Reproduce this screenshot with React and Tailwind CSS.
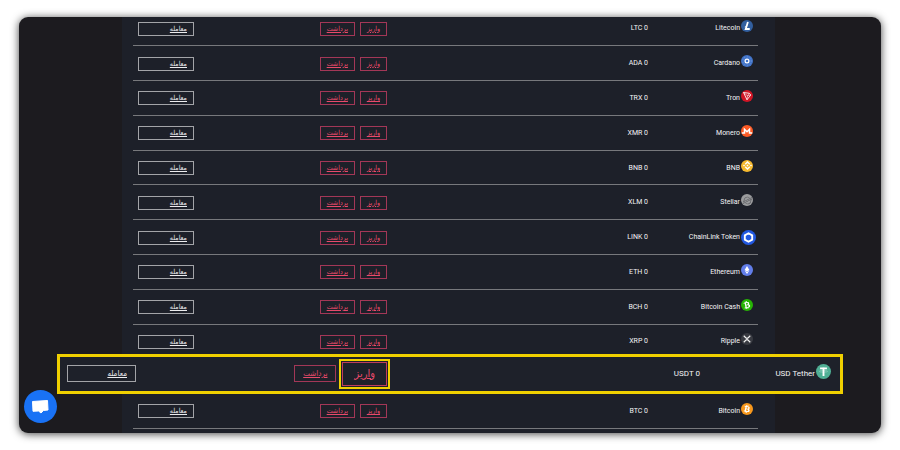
import { FaBtc, FaEthereum } from 'react-icons/fa';
import { SiBinance, SiStellar } from 'react-icons/si';

const LitecoinMark = () => (
  <svg viewBox="0 0 24 24" className="w-full h-full" fill="none" stroke="#fff" strokeWidth="3.6">
    <path d="M13.8 4 L9.4 18 H17.5" />
    <path d="M7.5 14 L13 11.5" strokeWidth="1.4" />
  </svg>
);

const CardanoMark = () => (
  <svg viewBox="0 0 24 24" className="w-full h-full" fill="none" stroke="#fff">
    <circle cx="12" cy="12" r="3.8" strokeWidth="2.4" />
    <circle cx="12" cy="12" r="8.5" strokeWidth="1.4" strokeDasharray="1.4 4.2" opacity="0.4" />
  </svg>
);

const TronMark = () => (
  <svg viewBox="0 0 24 24" className="w-full h-full" fill="none" stroke="#fff" strokeWidth="1.7" strokeLinejoin="round">
    <path d="M5 5 L16.5 6.5 L19.5 10 L12 19.5 Z" />
    <path d="M5 5 L13 11.5 L12 19.5 M13 11.5 L16.5 6.5 M13 11.5 L19.5 10" strokeWidth="1.1" />
  </svg>
);

const MoneroMark = () => (
  <svg viewBox="0 0 24 24" className="w-full h-full" fill="none" stroke="#fff" strokeWidth="3">
    <path d="M1.5 16 H7 V8.5 L12 13.5 L17 8.5 V16 H22.5" />
  </svg>
);

const ChainlinkMark = () => (
  <svg viewBox="0 0 24 24" className="w-full h-full" fill="none" stroke="#fff" strokeWidth="3">
    <path d="M12 5.2 L17.9 8.6 V15.4 L12 18.8 L6.1 15.4 V8.6 Z" />
  </svg>
);

const RippleMark = () => (
  <svg viewBox="0 0 24 24" className="w-full h-full" fill="none" stroke="#f2f2f2" strokeWidth="2.2">
    <path d="M5.5 5.5 L9.5 9.5 Q12 12 14.5 9.5 L18.5 5.5" />
    <path d="M5.5 18.5 L9.5 14.5 Q12 12 14.5 14.5 L18.5 18.5" />
  </svg>
);

const TetherMark = () => (
  <svg viewBox="0 0 24 24" className="w-full h-full" fill="none" stroke="#fff">
    <path d="M6.5 7 H17.5" strokeWidth="3" />
    <path d="M12 6 V19" strokeWidth="3" />
    <ellipse cx="12" cy="11.8" rx="6.5" ry="1.3" strokeWidth="0.8" opacity="0.5" />
  </svg>
);

const BitcoinMark = () => <FaBtc className="w-[8px] h-[8px] text-white rotate-12" />;
const BitcoinCashMark = () => <FaBtc className="w-[8px] h-[8px] text-white -rotate-12" />;
const EthereumMark = () => <FaEthereum className="w-[8px] h-[8px] text-white" />;
const BinanceMark = () => <SiBinance className="w-[9px] h-[9px] text-white" />;
const StellarMark = () => <SiStellar className="w-[9px] h-[9px] text-[#5d5e62]" />;

const COINS = [
  { name: 'Litecoin', symbol: 'LTC', disc: 'bg-[#325f9f]', Mark: LitecoinMark },
  { name: 'Cardano', symbol: 'ADA', disc: 'bg-[#4274c9]', Mark: CardanoMark },
  { name: 'Tron', symbol: 'TRX', disc: 'bg-[#d01525]', Mark: TronMark },
  { name: 'Monero', symbol: 'XMR', disc: 'bg-[#fb5a25]', Mark: MoneroMark },
  { name: 'BNB', symbol: 'BNB', disc: 'bg-[#f5b92e]', Mark: BinanceMark },
  { name: 'Stellar', symbol: 'XLM', disc: 'bg-[#9b9c9e]', Mark: StellarMark },
  { name: 'ChainLink Token', symbol: 'LINK', disc: 'bg-[#2258e0]', Mark: ChainlinkMark, large: true },
  { name: 'Ethereum', symbol: 'ETH', disc: 'bg-[#627eea]', Mark: EthereumMark },
  { name: 'Bitcoin Cash', symbol: 'BCH', disc: 'bg-[#27b405]', Mark: BitcoinCashMark },
  { name: 'Ripple', symbol: 'XRP', disc: 'bg-[#393b42]', Mark: RippleMark },
  { name: 'USD Tether', symbol: 'USDT', disc: 'bg-[#50af95]', Mark: TetherMark, highlighted: true },
  { name: 'Bitcoin', symbol: 'BTC', disc: 'bg-[#f8981c]', Mark: BitcoinMark },
];

const persian = "font-['DejaVu_Sans_Condensed','DejaVu_Sans',sans-serif]";
const linkBase = `${persian} block border underline whitespace-nowrap`;
const smallLink = `${linkBase} h-[14px] px-[6px] text-[7px] leading-[12px]`;
const bigLink = `${linkBase} h-[17px] px-[8px] text-[8px] leading-[15px]`;
const pink = 'border-[#a33757] text-[#e84a6b]';
const grey = 'border-[#a3a4a8] text-[#ececee]';

const Disc = ({ coin, size }) => (
  <span className={`${size} ${coin.disc} rounded-full flex items-center justify-center shrink-0`}>
    <coin.Mark />
  </span>
);

const CoinRow = ({ coin }) => (
  <tr className="h-[34px] border-b border-[#77787c]">
    <td className="pr-[2px]">
      <div className="flex items-center gap-px">
        <span className="w-[15px] flex justify-end">
          <Disc coin={coin} size={coin.large ? 'w-[15px] h-[15px]' : 'w-[12px] h-[12px] mb-[4px]'} />
        </span>
        <span className="whitespace-nowrap">{coin.name}</span>
      </div>
    </td>
    <td className="pr-[5px]">{coin.symbol} 0</td>
    <td className="pt-px pr-[5px]">
      <div className="flex gap-[5px]">
        <a href="#deposit" className={`${smallLink} ${pink}`}>واریز</a>
        <a href="#withdraw" className={`${smallLink} ${pink}`}>برداشت</a>
      </div>
    </td>
    <td className="pt-px px-[5px]">
      <a href="#trade" className={`${smallLink} ${grey}`}>معامله</a>
    </td>
  </tr>
);

// Enlarged row that sticks out past both sides of the table
const HighlightedRow = ({ coin }) => (
  <tr className="h-[34px]">
    <td colSpan={4} className="relative">
      <div className="absolute bottom-0 -left-[76px] -right-[85px] h-[40px] border-3 border-[#f0d000] bg-[#1e212a] grid grid-cols-[140px_1fr_254px_76px] items-center text-[8px]">
        <div className="flex items-center gap-px pr-[9px]">
          <Disc coin={coin} size="w-[15px] h-[15px] mb-[4px]" />
          <span className="whitespace-nowrap">{coin.name}</span>
        </div>
        <span>{coin.symbol} 0</span>
        <div className="flex items-center gap-[3px]">
          <span className="border-2 border-[#f0d000] p-px">
            <a href="#deposit" className={`${linkBase} border-[#c03c5c] text-[#e84a6b] px-[11px] h-[24px] text-[11px] leading-[21px]`}>واریز</a>
          </span>
          <a href="#withdraw" className={`${bigLink} ${pink}`}>برداشت</a>
        </div>
        <div className="pl-[7px]">
          <a href="#trade" className={`${bigLink} ${grey}`}>معامله</a>
        </div>
      </div>
    </td>
  </tr>
);

export default function App() {
  return (
    <div className="min-h-screen bg-white flex px-[19px] py-[17px] font-[Roboto,sans-serif]">
      <main
        dir="rtl"
        className="relative flex-1 flex max-h-[416px] bg-[#1c1b1f] rounded-[9px] overflow-hidden shadow-[0_1px_8px_rgba(0,0,0,0.75)]"
      >
        <div className="flex-1 ml-[103px] mr-[106px] pl-[11px] pr-[17px] bg-[#1d2029]">
          <table className="w-full h-[418px] -mt-[6px] table-fixed border-collapse text-right text-[7px] leading-[10px] text-[#f4f4f6]">
            <colgroup>
              <col className="w-[105px]" />
              <col />
              <col className="w-[193px]" />
              <col className="w-[66px]" />
            </colgroup>
            <tbody>
              {COINS.map((coin) =>
                coin.highlighted
                  ? <HighlightedRow key={coin.symbol} coin={coin} />
                  : <CoinRow key={coin.symbol} coin={coin} />
              )}
            </tbody>
          </table>
        </div>

        <button
          type="button"
          aria-label="Chat"
          className="absolute left-[5px] bottom-[10px] w-[33px] h-[33px] rounded-full bg-[#1972f5] flex items-center justify-center"
        >
          <svg viewBox="0 0 33 33" className="w-full h-full" fill="#fff" stroke="#fff" strokeLinejoin="round">
            <path d="M8.5 11.5 L23.5 10.5 L24 20 L19.5 20.5 L17 23 L14.5 21 L9 21.3 Z" />
          </svg>
        </button>
      </main>
    </div>
  );
}
